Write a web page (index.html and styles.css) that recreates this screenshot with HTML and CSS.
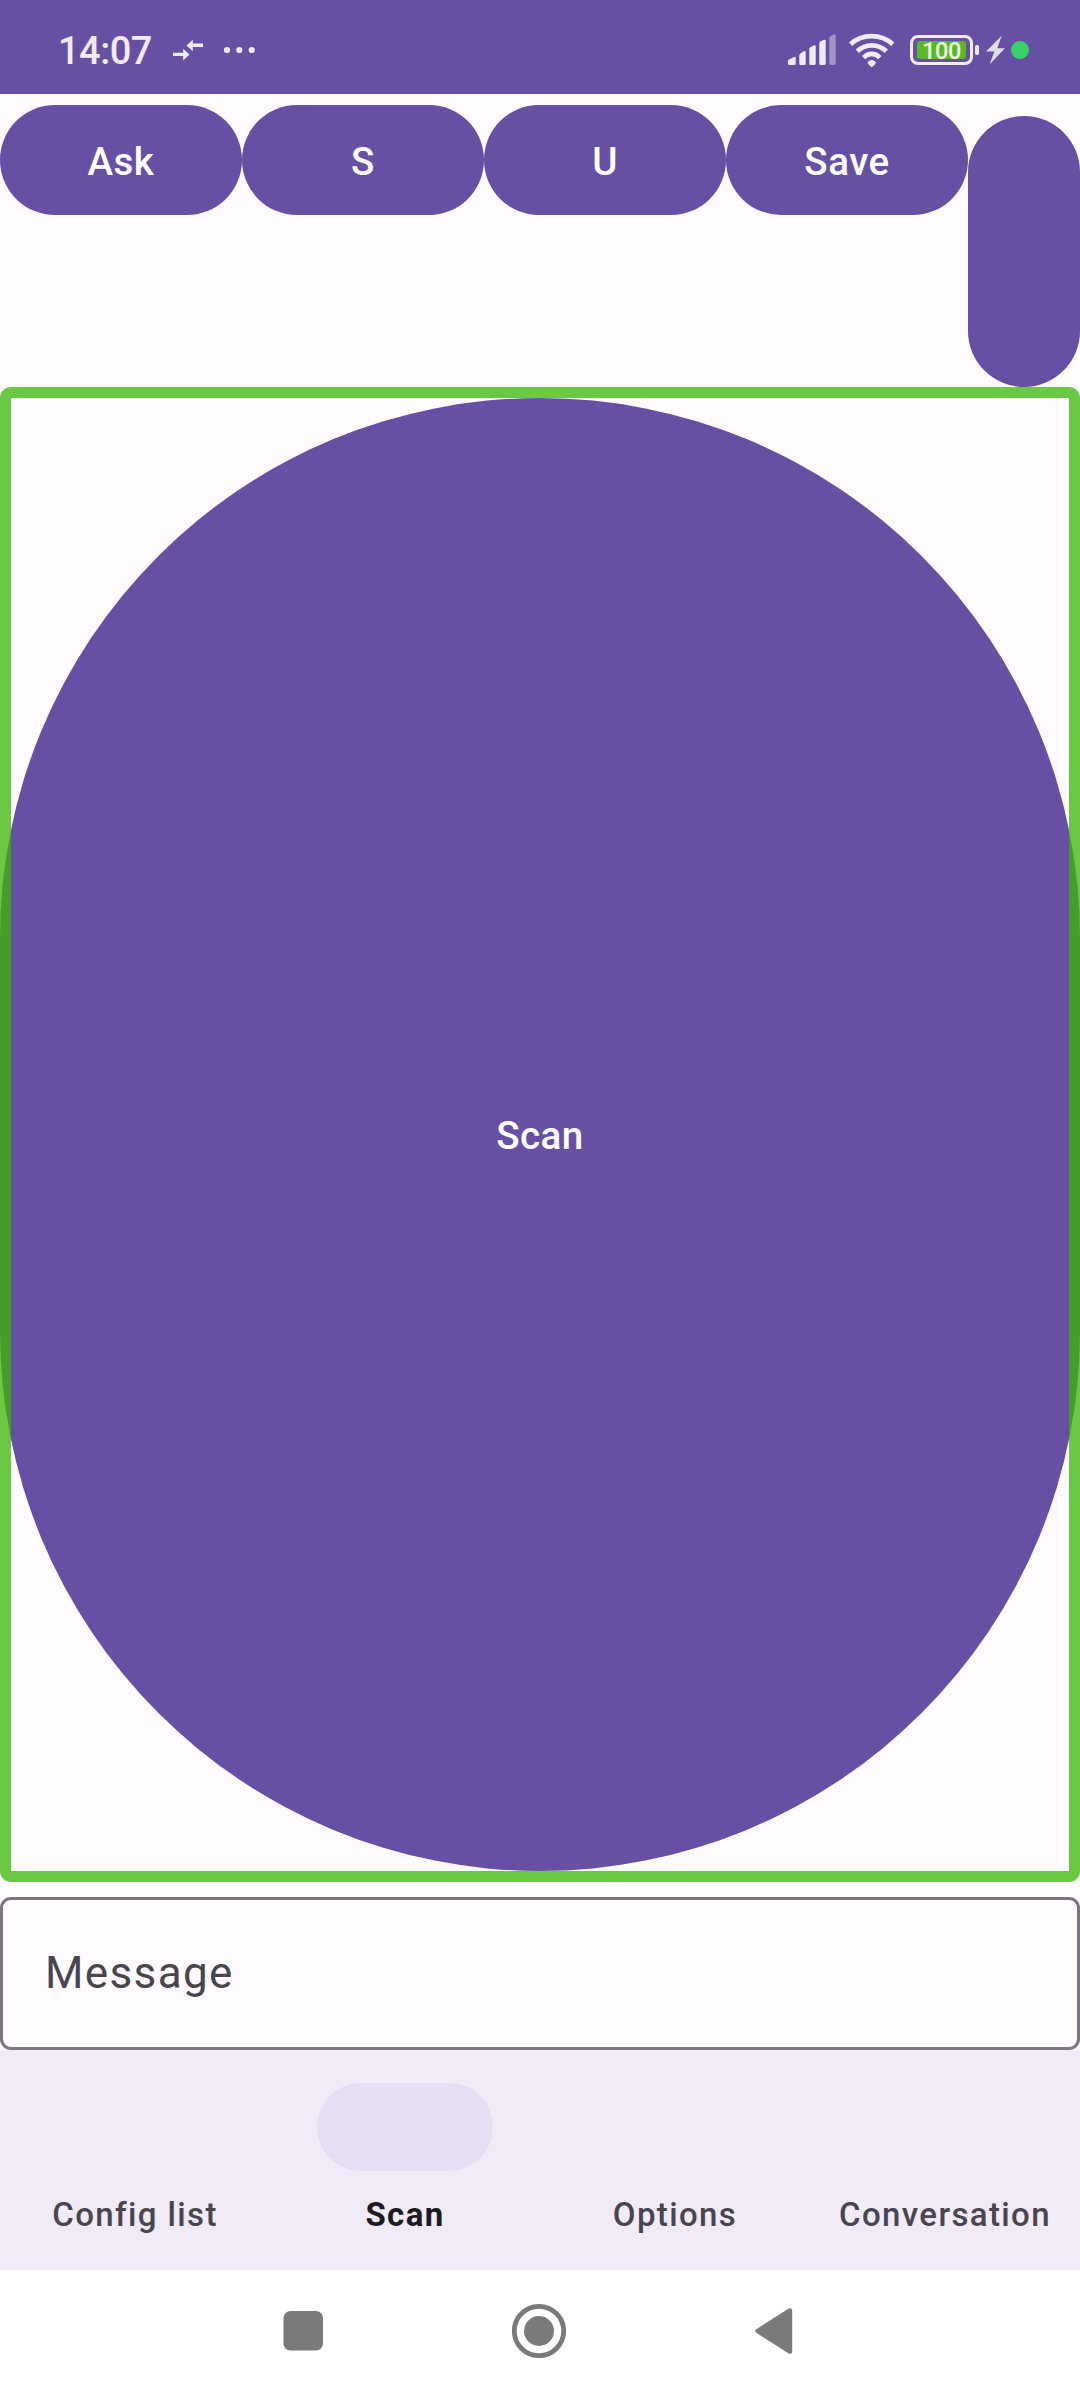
FILE: index.html
```html
<!DOCTYPE html>
<html lang="en">
<head>
<meta charset="utf-8">
<title>Scan</title>
<link rel="stylesheet" href="styles.css">
</head>
<body>
<div class="screen">
  <header class="status">
    <span class="clock">14:07</span>
    <svg class="notes" width="84" height="22" viewBox="172 39 84 22">
      <path d="M203 43.600H192.800V39.800L186.500 45.500 192.800 51.200V47.100H203zM173 52.800H183.200V48.700L189.500 54.500 183.200 60.500V55.900H173z"/>
      <circle cx="227" cy="50" r="3.100"/><circle cx="239.300" cy="50" r="3.100"/><circle cx="251.700" cy="50" r="3.100"/>
    </svg>
    <svg class="signal" width="48" height="32" viewBox="788 35 48 32">
      <path d="M788 62.200Q788 61 789 60.400L794 57.900Q795.700 57.300 795.700 59V64.500Q795.700 66 794.200 66H789.500Q788 66 788 64.500zM799.300 56.300Q799.300 55 800.400 54.400L803.800 52.300Q805.700 51.500 805.700 53.500V64.500Q805.700 66 804.200 66H800.800Q799.300 66 799.300 64.500zM809.300 50Q809.300 48.800 810.400 48.200L813.800 46.400Q815.700 45.600 815.700 47.400V64.500Q815.700 66 814.200 66H810.800Q809.300 66 809.300 64.500zM819.300 44.500Q819.300 43.200 820.400 42.500L823.800 40.800Q825.700 40.200 825.700 42V64.500Q825.700 66 824.200 66H820.800Q819.300 66 819.300 64.500z"/>
      <path class="dim" d="M829.300 39.200Q829.300 38 830.400 37.300L833.800 35.400Q835.700 34.700 835.700 36.500V64.500Q835.700 66 834.200 66H830.800Q829.300 66 829.300 64.500z"/>
    </svg>
    <svg class="wifi" width="48" height="36" viewBox="848 32 48 36">
      <path class="arc" d="M850.600 44.300C862 33.500 881 33.500 892.800 44.300M857.300 51.300C865.500 43.300 878 43.300 886.300 51.300M863.600 57.600C868.500 52.700 875 52.700 879.900 57.600"/>
      <path d="M867.600 62.300Q871.700 57.700 875.800 62.300Q876 63.300 875 64.200L872.700 66.500Q871.700 67.300 870.700 66.500L868.400 64.200Q867.400 63.300 867.600 62.300z"/>
    </svg>
    <span class="battery"><span class="charge">100</span></span>
    <svg class="bolt" width="26" height="30" viewBox="979 35 26 30">
      <rect class="bright" x="975" y="45" width="4" height="10" rx="1.700"/>
      <path d="M1001.800 35.500L986 51.500H994.500L989.500 64.500 1005 48.300H997.200z"/>
    </svg>
    <span class="dot"></span>
  </header>

  <main class="content">
    <div class="actions">
      <button class="btn">Ask</button>
      <button class="btn">S</button>
      <button class="btn">U</button>
      <button class="btn">Save</button>
      <button class="btn btn-tall" aria-label="More"></button>
    </div>
    <div class="frame"><button class="btn btn-scan">Scan</button></div>
    <div class="field">Message</div>
  </main>

  <nav class="tabs">
    <div class="tab"><span class="pill"></span>Config list</div>
    <div class="tab active"><span class="pill"></span>Scan</div>
    <div class="tab"><span class="pill"></span>Options</div>
    <div class="tab"><span class="pill"></span>Conversation</div>
  </nav>

  <footer class="system">
    <svg width="54" height="56" viewBox="276 2303 54 56"><rect x="283.500" y="2311" width="39.500" height="39.500" rx="7"/></svg>
    <svg width="56" height="56" viewBox="511 2303 56 56"><circle class="ring" cx="540" cy="2331" r="24.700"/><circle cx="540" cy="2331" r="15"/></svg>
    <svg width="54" height="56" viewBox="746 2303 54 56"><path d="M756.300 2329.200L788.800 2308.600Q792.200 2307.300 792.200 2310.800V2351.200Q792.200 2354.700 788.800 2353.400L756.300 2332.800Q754.300 2331 756.300 2329.200z"/></svg>
  </footer>
</div>
</body>
</html>
```
FILE: styles.css
```css
* { box-sizing: border-box; }

body {
  margin: 0;
  font-family: Roboto, "Liberation Sans", sans-serif;
  background: #fff;
}

.screen {
  width: 1080px;
  height: 2400px;
  display: flex;
  flex-direction: column;
  overflow: hidden;
}

svg { display: block; flex: none; }

/* Status bar */
.status {
  height: 94px;
  padding: 13px 51px 7px 58px;
  display: flex;
  align-items: center;
  background: #6750a3;
  color: #f0ecf6;
}
.status svg { fill: #f0ecf6; overflow: visible; }
.clock {
  width: 114px;
  padding-top: 2px;
  font-size: 38px;
  line-height: 44px;
  letter-spacing: -0.5px;
  font-weight: 500;
}
.notes { margin-right: 532px; }
.signal { margin-right: 12px; }
.signal .dim { fill: #a293c7; }
.wifi { margin-right: 14px; }
.wifi .arc { fill: none; stroke: #f0ecf6; stroke-width: 4.700; }
.battery {
  width: 63px;
  height: 30px;
  margin-right: 6px;
  padding: 3px 4px;
  border: 3px solid #f0ecf6;
  border-radius: 8px;
  display: flex;
}
.charge {
  flex: 1;
  border-radius: 3px;
  background: #59b924;
  color: #f3f8ee;
  font-size: 23.500px;
  font-weight: 500;
  line-height: 20px;
  letter-spacing: -0.5px;
  text-align: center;
}
.bolt { margin-right: 6px; }
.bolt path { fill: #e1dcee; }
.dot {
  width: 18px;
  height: 18px;
  border-radius: 50%;
  background: #37d26a;
}

/* Main content */
.content {
  height: 1956px;
  padding-top: 11px;
  display: flex;
  flex-direction: column;
  background: #fffbff;
}
.actions {
  height: 282px;
  display: flex;
  align-items: flex-start;
}
.btn {
  width: 242px;
  height: 110px;
  padding: 2px 0 0;
  border: 0;
  border-radius: 55px;
  background: #6750a3;
  color: #fff;
  font-family: inherit;
  font-size: 38.500px;
  font-weight: 500;
  letter-spacing: 0.500px;
}
.btn-tall {
  width: 112px;
  height: 271px;
  margin-top: 11px;
  border-radius: 56px;
}
.frame {
  position: relative;
  height: 1495px;
  padding: 11px 0;
}
.frame::after {
  content: "";
  position: absolute;
  inset: 0;
  border: 11px solid rgba(58, 183, 3, 0.750);
  border-radius: 11px;
}
.btn-scan {
  display: block;
  width: 100%;
  height: 100%;
  border-radius: 540px;
}
.field {
  height: 153px;
  margin-top: 15px;
  padding: 0 42px;
  border: 3px solid #7a757f;
  border-radius: 11px;
  color: #49454f;
  font-size: 44px;
  line-height: 147px;
  letter-spacing: 1.375px;
}

/* Tabs */
.tabs {
  height: 220px;
  padding-top: 33px;
  display: flex;
  background: #f1ebf7;
}
.tab {
  flex: 1;
  display: flex;
  flex-direction: column;
  align-items: center;
  gap: 22px;
  color: #49454f;
  font-size: 33px;
  font-weight: 500;
  line-height: 44px;
  letter-spacing: 1.375px;
  white-space: nowrap;
}
.pill {
  width: 176px;
  height: 88px;
  border-radius: 44px;
}
.active { color: #1c1b1f; font-weight: 700; }
.active .pill { background: #e7def6; }

/* System navigation */
.system {
  height: 130px;
  padding: 0 280px 8px 276px;
  display: flex;
  justify-content: space-between;
  align-items: center;
  background: #fff;
}
.system svg { fill: #7a7a7a; }
.system .ring { fill: none; stroke: #7a7a7a; stroke-width: 4.800; }
```
